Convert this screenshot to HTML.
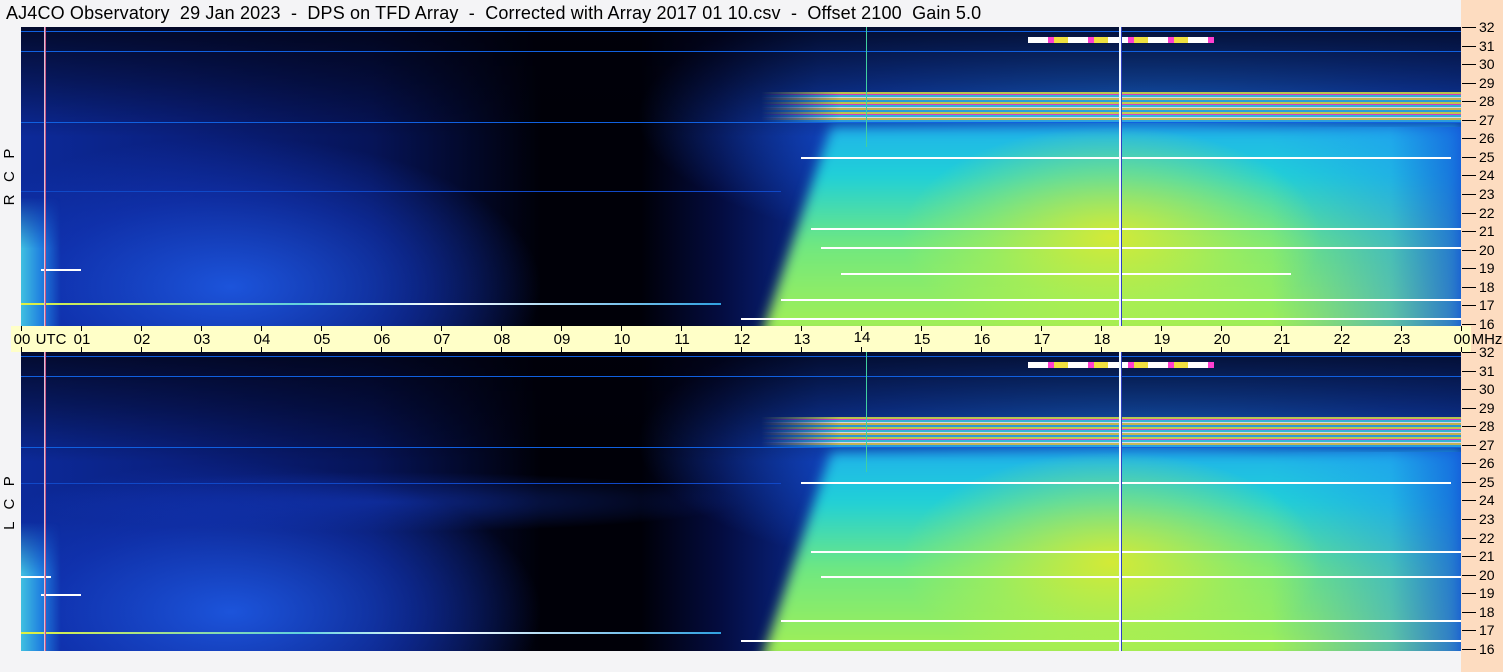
<!DOCTYPE html>
<html><head><meta charset="utf-8"><style>
*{margin:0;padding:0;box-sizing:border-box}
html{width:1503px;height:672px;overflow:hidden}
body{width:1503px;height:672px;background:#f4f4f6;position:relative;overflow:hidden;font-family:"Liberation Sans",sans-serif;color:#000}
.title{position:absolute;left:6px;top:3px;font-size:18px;white-space:pre;letter-spacing:0.15px}
.right{position:absolute;left:1461px;top:0;width:42px;height:672px;background:#fddcc0}
.panel{position:absolute;left:21px;width:1440px;height:299px;overflow:hidden;background:#000006}
.l{position:absolute}
.tick{position:absolute;left:1462px;width:14px;height:1px;background:#000}
.lab{position:absolute;left:1479px;font-size:14px;line-height:14px}
.band{position:absolute;left:11px;top:326px;width:1460px;height:26px;background:#ffffc8}
.tl{position:absolute;top:331px;font-size:15px;line-height:17px;transform:translateX(-50%)}
.vt{position:absolute;width:1px;height:5px;background:#000}
.side{position:absolute;font-size:15px;line-height:18px;transform:rotate(-90deg);white-space:pre;width:100px;height:18px;text-align:center}
</style></head><body>
<div class="title">AJ4CO Observatory  29 Jan 2023  -  DPS on TFD Array  -  Corrected with Array 2017 01 10.csv  -  Offset 2100  Gain 5.0</div>
<div class="right"></div>
<div class="band"></div>
<div id="p"></div>
<div class="side" style="left:-40px;top:168px">R   C   P</div>
<div class="side" style="left:-40px;top:494px">L   C   P</div>
<div id="axes"></div>
<script>
function panel(top,L){
var s='<div class="panel" style="top:'+top+'px">';
s+='<div class="l" style="inset:0;background:linear-gradient(90deg,#0c2a9a 0,#0a2080 150px,#061458 350px,#000008 520px,#000008 620px,#040c40 700px,#0a2a90 800px,#0b2fa0 1440px)"></div>';
s+='<div class="l" style="left:-100px;top:110px;width:620px;height:300px;border-radius:50%;background:radial-gradient(closest-side,rgba(30,90,230,.9),rgba(20,60,200,.5) 60%,transparent)"></div>';
if(L) s+='<div class="l" style="left:0;top:120px;width:720px;height:60px;background:radial-gradient(closest-side,rgba(20,60,200,.5),transparent)"></div>';
s+='<div class="l" style="left:0;top:170px;width:40px;height:129px;background:linear-gradient(90deg,#40c0e0,#2080e0 50%,transparent);-webkit-mask-image:linear-gradient(180deg,transparent,#000 40%)"></div>';
s+='<div class="l" style="left:600px;top:-60px;width:840px;height:300px;background:radial-gradient(ellipse 60% 50% at 62% 50%,#1a70e0,rgba(20,80,210,.7) 55%,transparent 100%)"></div>';
s+='<div class="l" style="left:0;top:0;width:1440px;height:110px;background:linear-gradient(180deg,rgba(0,0,10,.75),rgba(0,0,10,.4) 50%,rgba(0,0,10,0))"></div>';
s+='<div class="l" style="left:0;top:0;width:1440px;height:299px;filter:blur(6px)"><div class="l" style="left:720px;top:80px;width:730px;height:230px;clip-path:polygon(90px 20px,720px 20px,720px 230px,20px 230px);background:linear-gradient(180deg,#20a8f0 0,#20d0d8 30%,#70e880 60%,#a8f050 100%)"></div></div>';
s+='<div class="l" style="left:1250px;top:100px;width:200px;height:199px;background:linear-gradient(90deg,transparent,rgba(30,150,240,.5) 60%,rgba(20,90,220,.9))"></div>';
s+='<div class="l" style="left:880px;top:100px;width:420px;height:220px;border-radius:50%;background:radial-gradient(closest-side,rgba(230,235,40,.85),rgba(200,240,60,.4) 60%,transparent)"></div>';
s+='<div class="l" style="left:740px;top:65px;width:700px;height:30px;background:repeating-linear-gradient(180deg,#e8e840 0 2px,#ff40d0 2px 3px,#40d0e0 3px 5px,#fff 5px 6px,#f0d040 6px 8px,#30b0e8 8px 10px);opacity:.8;-webkit-mask-image:linear-gradient(90deg,transparent,#000 80px)"></div>';
s+='<div class="l" style="left:1007px;top:10px;width:186px;height:6px;background:repeating-linear-gradient(90deg,#fff 0 20px,#ff40d0 20px 26px,#f0e040 26px 40px)"></div>';
var hl=[[4,0,1440,'#1060e0'],[24,0,1440,'#1060e0'],[95,0,1440,'#1060e0'],[L?131:164,0,760,'#1048c8']];
hl.forEach(function(a){s+='<div class="l" style="left:'+a[1]+'px;top:'+a[0]+'px;width:'+a[2]+'px;height:1px;background:'+a[3]+'"></div>';});
var wl=L?[[130,780,650],[199,790,650],[224,800,640],[268,760,680],[288,720,720],[224,0,30],[242,20,40]]:[[130,780,650],[201,790,650],[220,800,640],[246,820,450],[272,760,680],[291,720,720],[242,20,40]];
wl.forEach(function(a){s+='<div class="l" style="left:'+a[1]+'px;top:'+a[0]+'px;width:'+a[2]+'px;height:2px;background:#fff"></div>';});
s+='<div class="l" style="left:0;top:'+(L?280:276)+'px;width:700px;height:2px;background:linear-gradient(90deg,#e0f040,#60d0e0 40%,#fff 60%,#30a0e0)"></div>';
s+='<div class="l" style="left:23px;top:0;width:2px;height:299px;background:linear-gradient(90deg,#e0f8ff,#c02060)"></div>';
s+='<div class="l" style="left:1098px;top:0;width:2px;height:299px;background:#f0f8ff"></div><div class="l" style="left:1100px;top:0;width:1px;height:299px;background:#3040c0"></div>';
s+='<div class="l" style="left:845px;top:0;width:1px;height:120px;background:#40d0a0"></div>';
return s+'</div>';}
document.getElementById('p').innerHTML=panel(27,0)+panel(352,1);
var h='';
for(var p=0;p<2;p++){var y0=p?352:27;
for(var i=0;i<=16;i++){var y=Math.round(y0+i*18.56);
h+='<div class="tick" style="top:'+y+'px"></div><div class="lab" style="top:'+(y-7)+'px">'+(32-i)+'</div>';}}
for(var k=0;k<=24;k++){var x=21+k*60;
h+='<div class="vt" style="left:'+x+'px;top:326px"></div><div class="vt" style="left:'+x+'px;top:347px"></div>';
var t=(k==24?'00':(k<10?'0'+k:''+k));
h+='<div class="tl" style="left:'+(x+1)+'px;'+(k==14?'top:329px':'')+'">'+t+'</div>';}
h+='<div class="tl" style="left:51px">UTC</div><div class="tl" style="left:1487px">MHz</div>';
document.getElementById('axes').innerHTML=h;
</script>
</body></html>
